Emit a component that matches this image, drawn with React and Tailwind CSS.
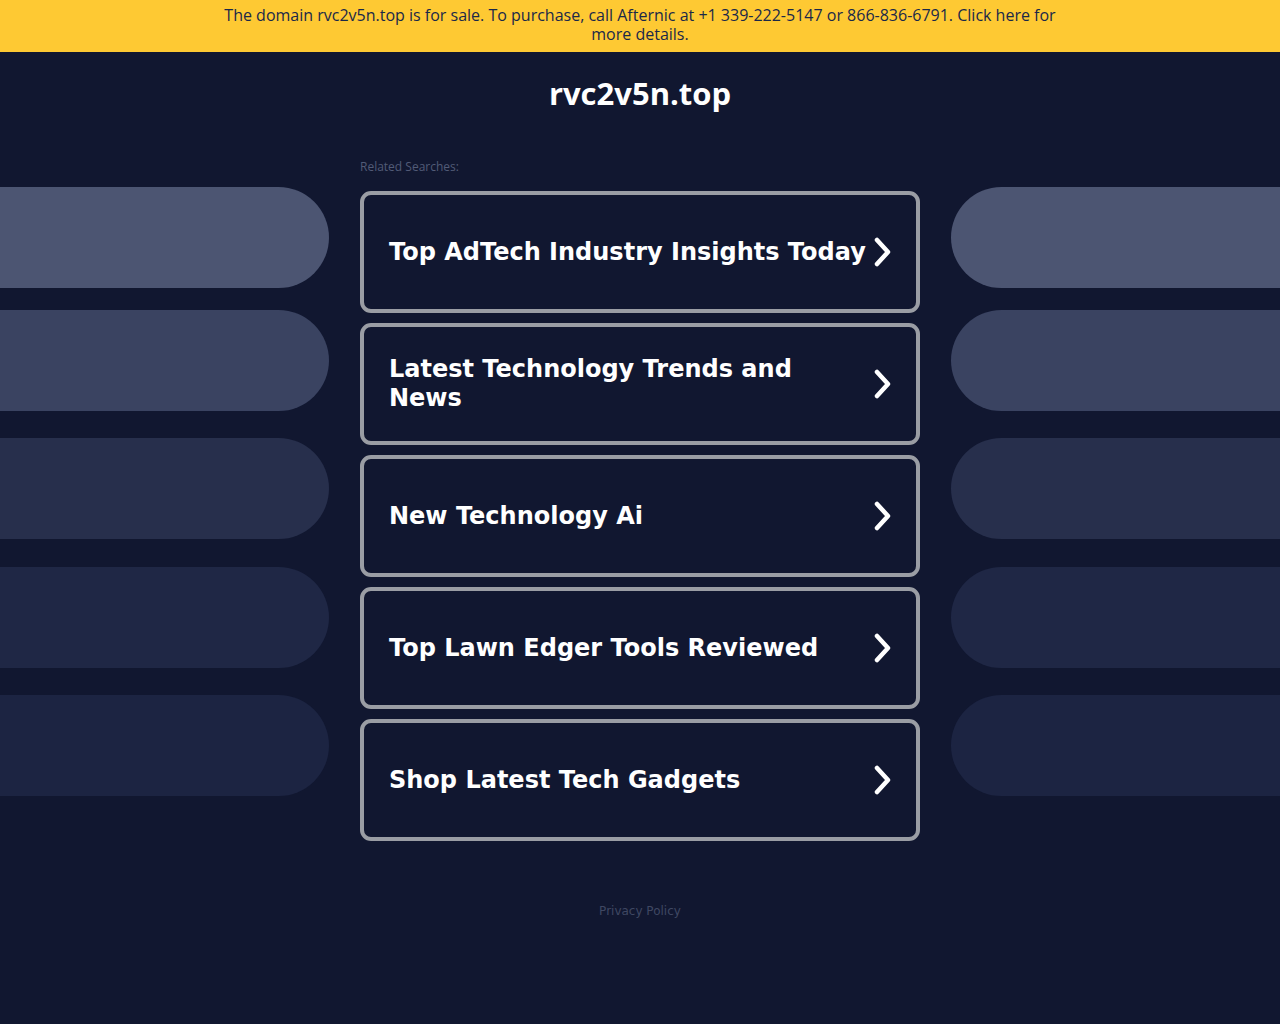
import React from 'react';

const SEARCHES = [
  'Top AdTech Industry Insights Today',
  'Latest Technology Trends and News',
  'New Technology Ai',
  'Top Lawn Edger Tools Reviewed',
  'Shop Latest Tech Gadgets',
];

// decorative pills on each side; top offsets follow the screenshot
const PILLS = [
  { color: 'bg-[#4c5572]', mt: 'mt-[135px]' },
  { color: 'bg-[#3a4361]', mt: 'mt-[22px]' },
  { color: 'bg-[#272f4c]', mt: 'mt-[27px]' },
  { color: 'bg-[#1f2745]', mt: 'mt-[28px]' },
  { color: 'bg-[#1c2442]', mt: 'mt-[27px]' },
];

function Chevron() {
  return (
    <svg width="20" height="30" viewBox="0 0 20 30" fill="none" className="shrink-0">
      <path d="M5 3 L16 15 L5 27" stroke="white" strokeWidth="4.5" strokeLinecap="round" strokeLinejoin="round" />
    </svg>
  );
}

function PillColumn({ side }) {
  return (
    <div className="w-[329px] shrink-0 flex flex-col">
      {PILLS.map((p, i) => (
        <div
          key={i}
          className={`${p.mt} h-[101px] ${p.color} ${side === 'left' ? 'rounded-r-full' : 'rounded-l-full'}`}
        />
      ))}
    </div>
  );
}

export default function App() {
  return (
    <div className="min-h-[1024px] bg-[#111730] font-['DejaVu_Sans',sans-serif]">
      <div className="bg-[#fec933] h-[52px] flex items-start justify-center pt-[6px]">
        <p className="max-w-[850px] text-center text-[16px] leading-[19px] text-[#1a2849] font-['Open_Sans',sans-serif] font-medium">
          The domain rvc2v5n.top is for sale. To purchase, call Afternic at +1 339-222-5147 or 866-836-6791. Click here for more details.
        </p>
      </div>

      <div className="flex justify-between">
        <PillColumn side="left" />

        <div className="w-[560px] shrink-0 flex flex-col">
          <h1 className="mt-[22px] text-center text-white text-[31px] leading-[38px] font-bold font-['Open_Sans',sans-serif]">
            rvc2v5n.top
          </h1>
          <p className="mt-[47px] text-[12px] leading-[16px] text-[#525b77] font-['Open_Sans',sans-serif]">Related Searches:</p>
          <div className="mt-[16px] flex flex-col gap-[10px]">
            {SEARCHES.map((s) => (
              <a
                key={s}
                href="#"
                className="h-[122px] rounded-[11px] border-[4px] border-[#9a9da4] flex items-center justify-between pl-[25px] pr-[24px] gap-1"
              >
                <span className="text-white text-[24px] leading-[29px] font-bold">{s}</span>
                <Chevron />
              </a>
            ))}
          </div>
          <p className="mt-[61px] text-center text-[12px] text-[#3f4762]">Privacy Policy</p>
        </div>

        <PillColumn side="right" />
      </div>
    </div>
  );
}
